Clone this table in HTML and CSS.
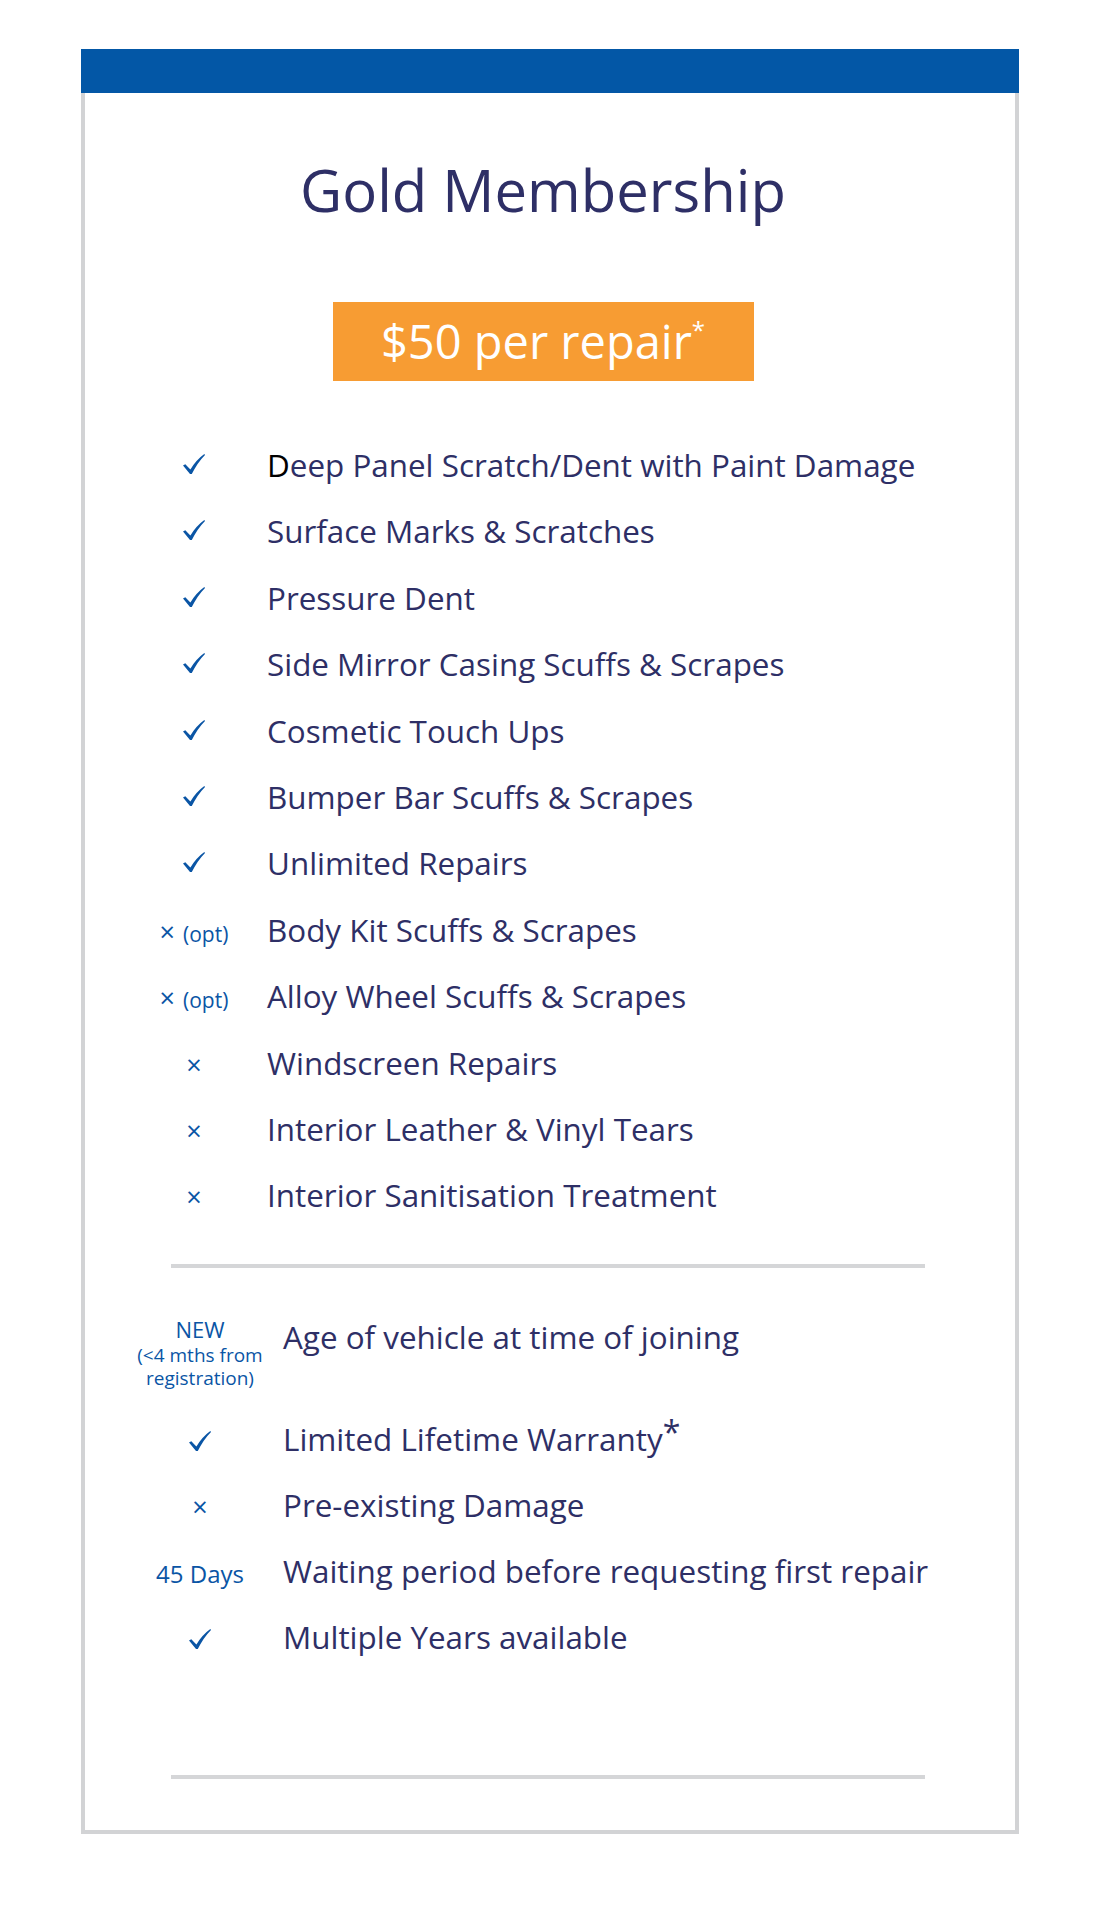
FILE: index.html
```html
<!DOCTYPE html>
<html lang="en">
<head>
    <meta charset="UTF-8">
    <title>Gold Membership</title>
    <link rel="stylesheet" href="styles.css">
</head>
<body>

    <div class="plan">
        <div class="plan-bar"></div>
        <div class="plan-body">

            <div class="plan-head">
                <h2 class="plan-title">Gold Membership</h2>
                <div class="price">$50 per repair<sup>*</sup></div>
            </div>

            <!-- what is covered -->
            <ul class="cover">
                <li><span class="mark"><svg class="tick" viewBox="0 0 22 20"><path d="M0 11.6 L2.3 10.2 L7.4 15.6 Q12.6 6.4 21.3 0 L22 0.9 Q14.6 8.4 8.8 20 L7 20 Z"/></svg></span><span class="txt"><b class="first">D</b>eep Panel Scratch/Dent with Paint Damage</span></li>
                <li><span class="mark"><svg class="tick" viewBox="0 0 22 20"><path d="M0 11.6 L2.3 10.2 L7.4 15.6 Q12.6 6.4 21.3 0 L22 0.9 Q14.6 8.4 8.8 20 L7 20 Z"/></svg></span><span class="txt">Surface Marks &amp; Scratches</span></li>
                <li><span class="mark"><svg class="tick" viewBox="0 0 22 20"><path d="M0 11.6 L2.3 10.2 L7.4 15.6 Q12.6 6.4 21.3 0 L22 0.9 Q14.6 8.4 8.8 20 L7 20 Z"/></svg></span><span class="txt">Pressure Dent</span></li>
                <li><span class="mark"><svg class="tick" viewBox="0 0 22 20"><path d="M0 11.6 L2.3 10.2 L7.4 15.6 Q12.6 6.4 21.3 0 L22 0.9 Q14.6 8.4 8.8 20 L7 20 Z"/></svg></span><span class="txt">Side Mirror Casing Scuffs &amp; Scrapes</span></li>
                <li><span class="mark"><svg class="tick" viewBox="0 0 22 20"><path d="M0 11.6 L2.3 10.2 L7.4 15.6 Q12.6 6.4 21.3 0 L22 0.9 Q14.6 8.4 8.8 20 L7 20 Z"/></svg></span><span class="txt">Cosmetic Touch Ups</span></li>
                <li><span class="mark"><svg class="tick" viewBox="0 0 22 20"><path d="M0 11.6 L2.3 10.2 L7.4 15.6 Q12.6 6.4 21.3 0 L22 0.9 Q14.6 8.4 8.8 20 L7 20 Z"/></svg></span><span class="txt">Bumper Bar Scuffs &amp; Scrapes</span></li>
                <li><span class="mark"><svg class="tick" viewBox="0 0 22 20"><path d="M0 11.6 L2.3 10.2 L7.4 15.6 Q12.6 6.4 21.3 0 L22 0.9 Q14.6 8.4 8.8 20 L7 20 Z"/></svg></span><span class="txt">Unlimited Repairs</span></li>
                <li><span class="mark"><span class="x">&times;</span><span class="opt">(opt)</span></span><span class="txt">Body Kit Scuffs &amp; Scrapes</span></li>
                <li><span class="mark"><span class="x">&times;</span><span class="opt">(opt)</span></span><span class="txt">Alloy Wheel Scuffs &amp; Scrapes</span></li>
                <li><span class="mark"><span class="x">&times;</span></span><span class="txt">Windscreen Repairs</span></li>
                <li><span class="mark"><span class="x">&times;</span></span><span class="txt">Interior Leather &amp; Vinyl Tears</span></li>
                <li><span class="mark"><span class="x">&times;</span></span><span class="txt">Interior Sanitisation Treatment</span></li>
            </ul>

            <hr class="line">

            <!-- terms -->
            <ul class="terms">
                <li class="tall">
                    <span class="mark label"><span class="new">NEW</span>(&lt;4 mths from registration)</span>
                    <span class="txt">Age of vehicle at time of joining</span>
                </li>
                <li><span class="mark"><svg class="tick" viewBox="0 0 22 20"><path d="M0 11.6 L2.3 10.2 L7.4 15.6 Q12.6 6.4 21.3 0 L22 0.9 Q14.6 8.4 8.8 20 L7 20 Z"/></svg></span><span class="txt">Limited Lifetime Warranty<span class="star">*</span></span></li>
                <li><span class="mark"><span class="x">&times;</span></span><span class="txt">Pre-existing Damage</span></li>
                <li><span class="mark days">45 Days</span><span class="txt">Waiting period before requesting first repair</span></li>
                <li><span class="mark"><svg class="tick" viewBox="0 0 22 20"><path d="M0 11.6 L2.3 10.2 L7.4 15.6 Q12.6 6.4 21.3 0 L22 0.9 Q14.6 8.4 8.8 20 L7 20 Z"/></svg></span><span class="txt">Multiple Years available</span></li>
            </ul>

            <hr class="line last">
        </div>
    </div>

</body>
</html>
```

FILE: styles.css
```css
body {
    margin: 0;
    background: #fff;
    font-family: "Open Sans", "Noto Sans", sans-serif;
    color: #2e2f66;
}

.plan {
    width: 938px;
    margin: 49px 0 0 81px;
}
.plan-bar {
    height: 44px;
    background: #0357a6;
}
.plan-body {
    border: 4px solid #d2d3d5;
    border-top: none;
    padding: 60px 0 51px;
}

.plan-head {
    padding-right: 14px;
    text-align: center;
}
.plan-title {
    margin: 0;
    font-size: 58px;
    font-weight: 400;
    line-height: 74px;
}
.price {
    width: 421px;
    height: 79px;
    margin: 75px auto 0;
    line-height: 79px;
    background: #f79c33;
    color: #fff;
    font-size: 47px;
}
.price sup {
    font-size: 24px;
    line-height: 0;
    vertical-align: 20px;
}

ul {
    list-style: none;
    margin: 0;
    padding: 0;
}
li {
    display: flex;
    align-items: baseline;
    height: 66.4px;
    font-size: 31.4px;
    line-height: 66.4px;
}
.mark {
    flex: none;
    color: #0a55a5;
    text-align: center;
    font-size: 21px;
    line-height: 24px;
}
.tick {
    width: 22px;
    height: 20px;
    fill: #0a55a5;
    vertical-align: 3px;
}
.x {
    font-size: 27px;
}
.opt {
    margin-left: 8px;
}
.first {
    font-weight: 400;
    color: #000;
}

.cover {
    margin-top: 51px;
}
.cover .mark {
    width: 146px;
    margin-left: 36px;
}

.line {
    border: none;
    height: 4px;
    background: #d5d6d8;
    width: 754px;
    margin: 35px 0 0 86px;
}
.line.last {
    margin-top: 105px;
}

.terms {
    margin-top: 36px;
}
.terms li {
    height: 66px;
    line-height: 66px;
}
.terms .mark {
    width: 166px;
    margin-left: 32px;
}
.terms .tick {
    vertical-align: 0;
}
.terms .tall {
    align-items: flex-start;
    height: 102px;
}
.label {
    padding-top: 10px;
    font-size: 19px;
    line-height: 23px;
}
.new {
    display: block;
    font-size: 22px;
    line-height: 30px;
}
.days {
    font-size: 24px;
}
.star {
    font-size: 32px;
    line-height: 0;
    vertical-align: 7px;
}
```
